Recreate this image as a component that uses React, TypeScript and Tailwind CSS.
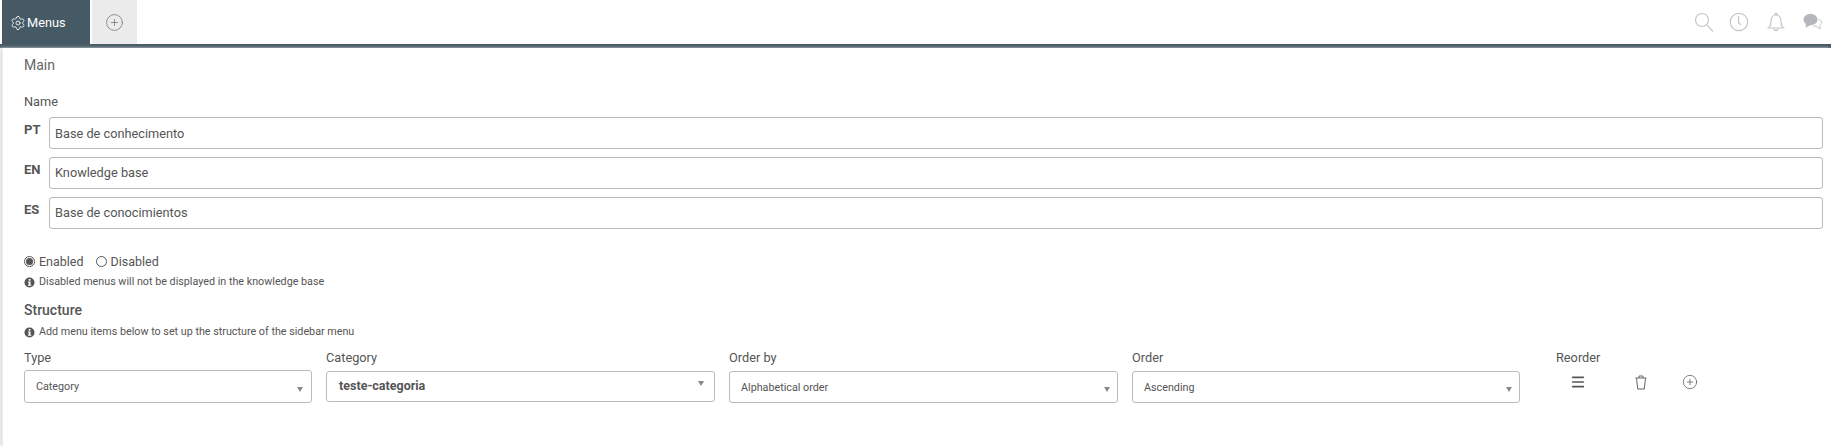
import { Settings, CirclePlus, Menu } from "lucide-react";

function Lang({ code, value, boxCls }: { code: string; value: string; boxCls: string }) {
  return (
    <div className="flex h-[32px] mb-[8px]">
      <span className="w-[25px] text-[13px] font-bold text-[#555] leading-[26px]">{code}</span>
      <div className={`flex-1 border border-[#bbb] rounded-[3px] px-[5px] flex items-center text-[12.75px] text-[#555] ${boxCls}`}>{value}</div>
    </div>
  );
}

function Info() {
  return (
    <svg width="11" height="11" viewBox="0 0 11 11" className="mr-[4px] shrink-0">
      <circle cx="5.500" cy="5.500" r="5" fill="#555" />
      <rect x="4.700" y="2" width="1.800" height="1.700" fill="#fff" />
      <path d="M3.900 4.500h2.600v3.300h.8v1H3.900v-1h.8V5.500h-.8z" fill="#fff" />
    </svg>
  );
}

function Sel({ label, value, cls, boxCls, arrowCls, bold }: { label: string; value: string; cls: string; boxCls: string; arrowCls: string; bold?: boolean }) {
  return (
    <div className={cls}>
      <div className="text-[12.75px] text-[#555] leading-[18px] h-[21px] mt-[-3px]">{label}</div>
      <div className={`relative border border-[#bbb] rounded-[3px] flex items-center pl-[11px] ${boxCls}`}>
        <span className={bold ? "text-[12.5px] font-bold text-[#555]" : "text-[10.75px] text-[#555] pt-[2px]"}>{value}</span>
        <span className={`absolute border-x-[3.5px] border-x-transparent border-t-[5px] border-t-[#888] ${arrowCls}`} />
      </div>
    </div>
  );
}

export default function App() {
  return (
    <div className="w-[1831px] h-[446px] bg-white overflow-hidden font-['Roboto',sans-serif] text-[#555]">
      <div className="h-[48px] border-b-4 border-[#455a64] flex pl-[2px] items-stretch">
        <div className="w-[88px] bg-[#455a64] text-white text-[12.75px] flex items-center pl-[8px] pt-[1px] gap-[1px]">
          <Settings size={16} strokeWidth={1.25} />Menus
        </div>
        <div className="w-[45px] ml-[2px] bg-[#ebebeb] flex items-center justify-center">
          <CirclePlus size={19} strokeWidth={1} className="text-[#777]" />
        </div>
        <div className="flex-1 relative text-[#c2c6cc]">
          <div className="absolute right-[8px] top-[12px] flex items-center">
            <svg width="20" height="20" viewBox="0 0 20 20" fill="none" stroke="currentColor" strokeWidth="1.200">
              <circle cx="8" cy="8" r="6.500" />
              <path d="M12.800 12.800L19 19.500" />
            </svg>
            <svg width="20" height="20" viewBox="0 0 20 20" fill="none" stroke="currentColor" strokeWidth="1.200" className="ml-[15px]">
              <circle cx="10" cy="10" r="8.700" />
              <path d="M9.500 4v6.500l2.500 2.500" />
            </svg>
            <svg width="18" height="20" viewBox="0 0 18 20" fill="none" stroke="currentColor" strokeWidth="1.200" className="ml-[18px]">
              <path d="M1.500 16c2-1.500 2.500-3 2.500-7 0-3.500 2-6 5-6s5 2.500 5 6c0 4 .5 5.500 2.500 7z" />
              <path d="M7 16.500a2 2 0 0 0 4 0M8 3V1.500h2V3" />
            </svg>
            <svg width="20" height="18" viewBox="0 0 20 18" className="ml-[18px]">
              <ellipse cx="7.500" cy="6.500" rx="7" ry="5.800" fill="#b4b8bc" />
              <path d="M3 10L2.500 14.500 8 12z" fill="#b4b8bc" />
              <path d="M15.500 6c2.500 1 3.500 3 2.800 4.800-.4 1-1 1.500-1.600 2l.6 3.200-4.300-2.800-3-.2" fill="none" stroke="#c2c6cc" />
            </svg>
          </div>
        </div>
      </div>
      <div className="h-[398px] pl-[21px] pr-[8px] ml-[2px] border-l border-[#eee] shadow-[-2px_0_3px_#ddd]">
        <div className="text-[14px] pt-[9px] leading-[17px] text-[#666]">Main</div>
        <div className="text-[12.75px] mt-[20px] leading-[16px]">Name</div>
        <div className="mt-[7px]">
          <Lang code="PT" value="Base de conhecimento" boxCls="pt-[2px]" />
          <Lang code="EN" value="Knowledge base" boxCls="" />
          <Lang code="ES" value="Base de conocimientos" boxCls="" />
        </div>
        <div className="flex items-center text-[12.5px] mt-[25px] h-[16px]">
          <span className="w-[11px] h-[11px] mb-[2px] rounded-full border border-[#555] flex items-center justify-center mr-[4px]"><span className="w-[7px] h-[7px] rounded-full bg-[#555]" /></span>
          Enabled
          <span className="w-[11px] h-[11px] mb-[2px] rounded-full border border-[#555] ml-[12px] mr-[4px]" />
          Disabled
        </div>
        <div className="flex items-center text-[10.75px] mt-[5px] h-[14px]"><Info />Disabled menus will not be displayed in the knowledge base</div>
        <div className="text-[14px] font-medium mt-[13px] leading-[17px]">Structure</div>
        <div className="flex items-center text-[10.75px] mt-[6px] h-[14px]"><Info />Add menu items below to set up the structure of the sidebar menu</div>
        <div className="flex items-start mt-[13px]">
          <Sel cls="w-[288px] mr-[14px]" boxCls="h-[33px]" arrowCls="right-[8px] top-[16px]" label="Type" value="Category" />
          <Sel cls="w-[389px] mr-[14px]" boxCls="h-[31px] mt-[1px] pl-[12px]" arrowCls="right-[10px] top-[9px]" label="Category" value="teste-categoria" bold />
          <Sel cls="w-[389px] mr-[14px]" boxCls="h-[32px] mt-[1px]" arrowCls="right-[7px] top-[15px]" label="Order by" value="Alphabetical order" />
          <Sel cls="w-[388px]" boxCls="h-[32px] mt-[1px]" arrowCls="right-[7px] top-[15px]" label="Order" value="Ascending" />
          <div className="ml-[36px] mt-[-3px]">
            <div className="text-[12.75px] leading-[18px]">Reorder</div>
            <div className="flex items-center h-[22px] mt-[4px]">
              <Menu size={16} strokeWidth={2.5} className="ml-[14px]" />
              <svg width="12" height="15" viewBox="0 0 12 15" fill="none" stroke="#666" strokeWidth="1" className="ml-[49px]">
                <path d="M.5 3h11M1.500 3l1.200 11h6.600L10.500 3M4 3V1h4v2" />
              </svg>
              <CirclePlus size={16} strokeWidth={1.1} className="ml-[35px] text-[#555]" />
            </div>
          </div>
        </div>
      </div>
    </div>
  );
}
